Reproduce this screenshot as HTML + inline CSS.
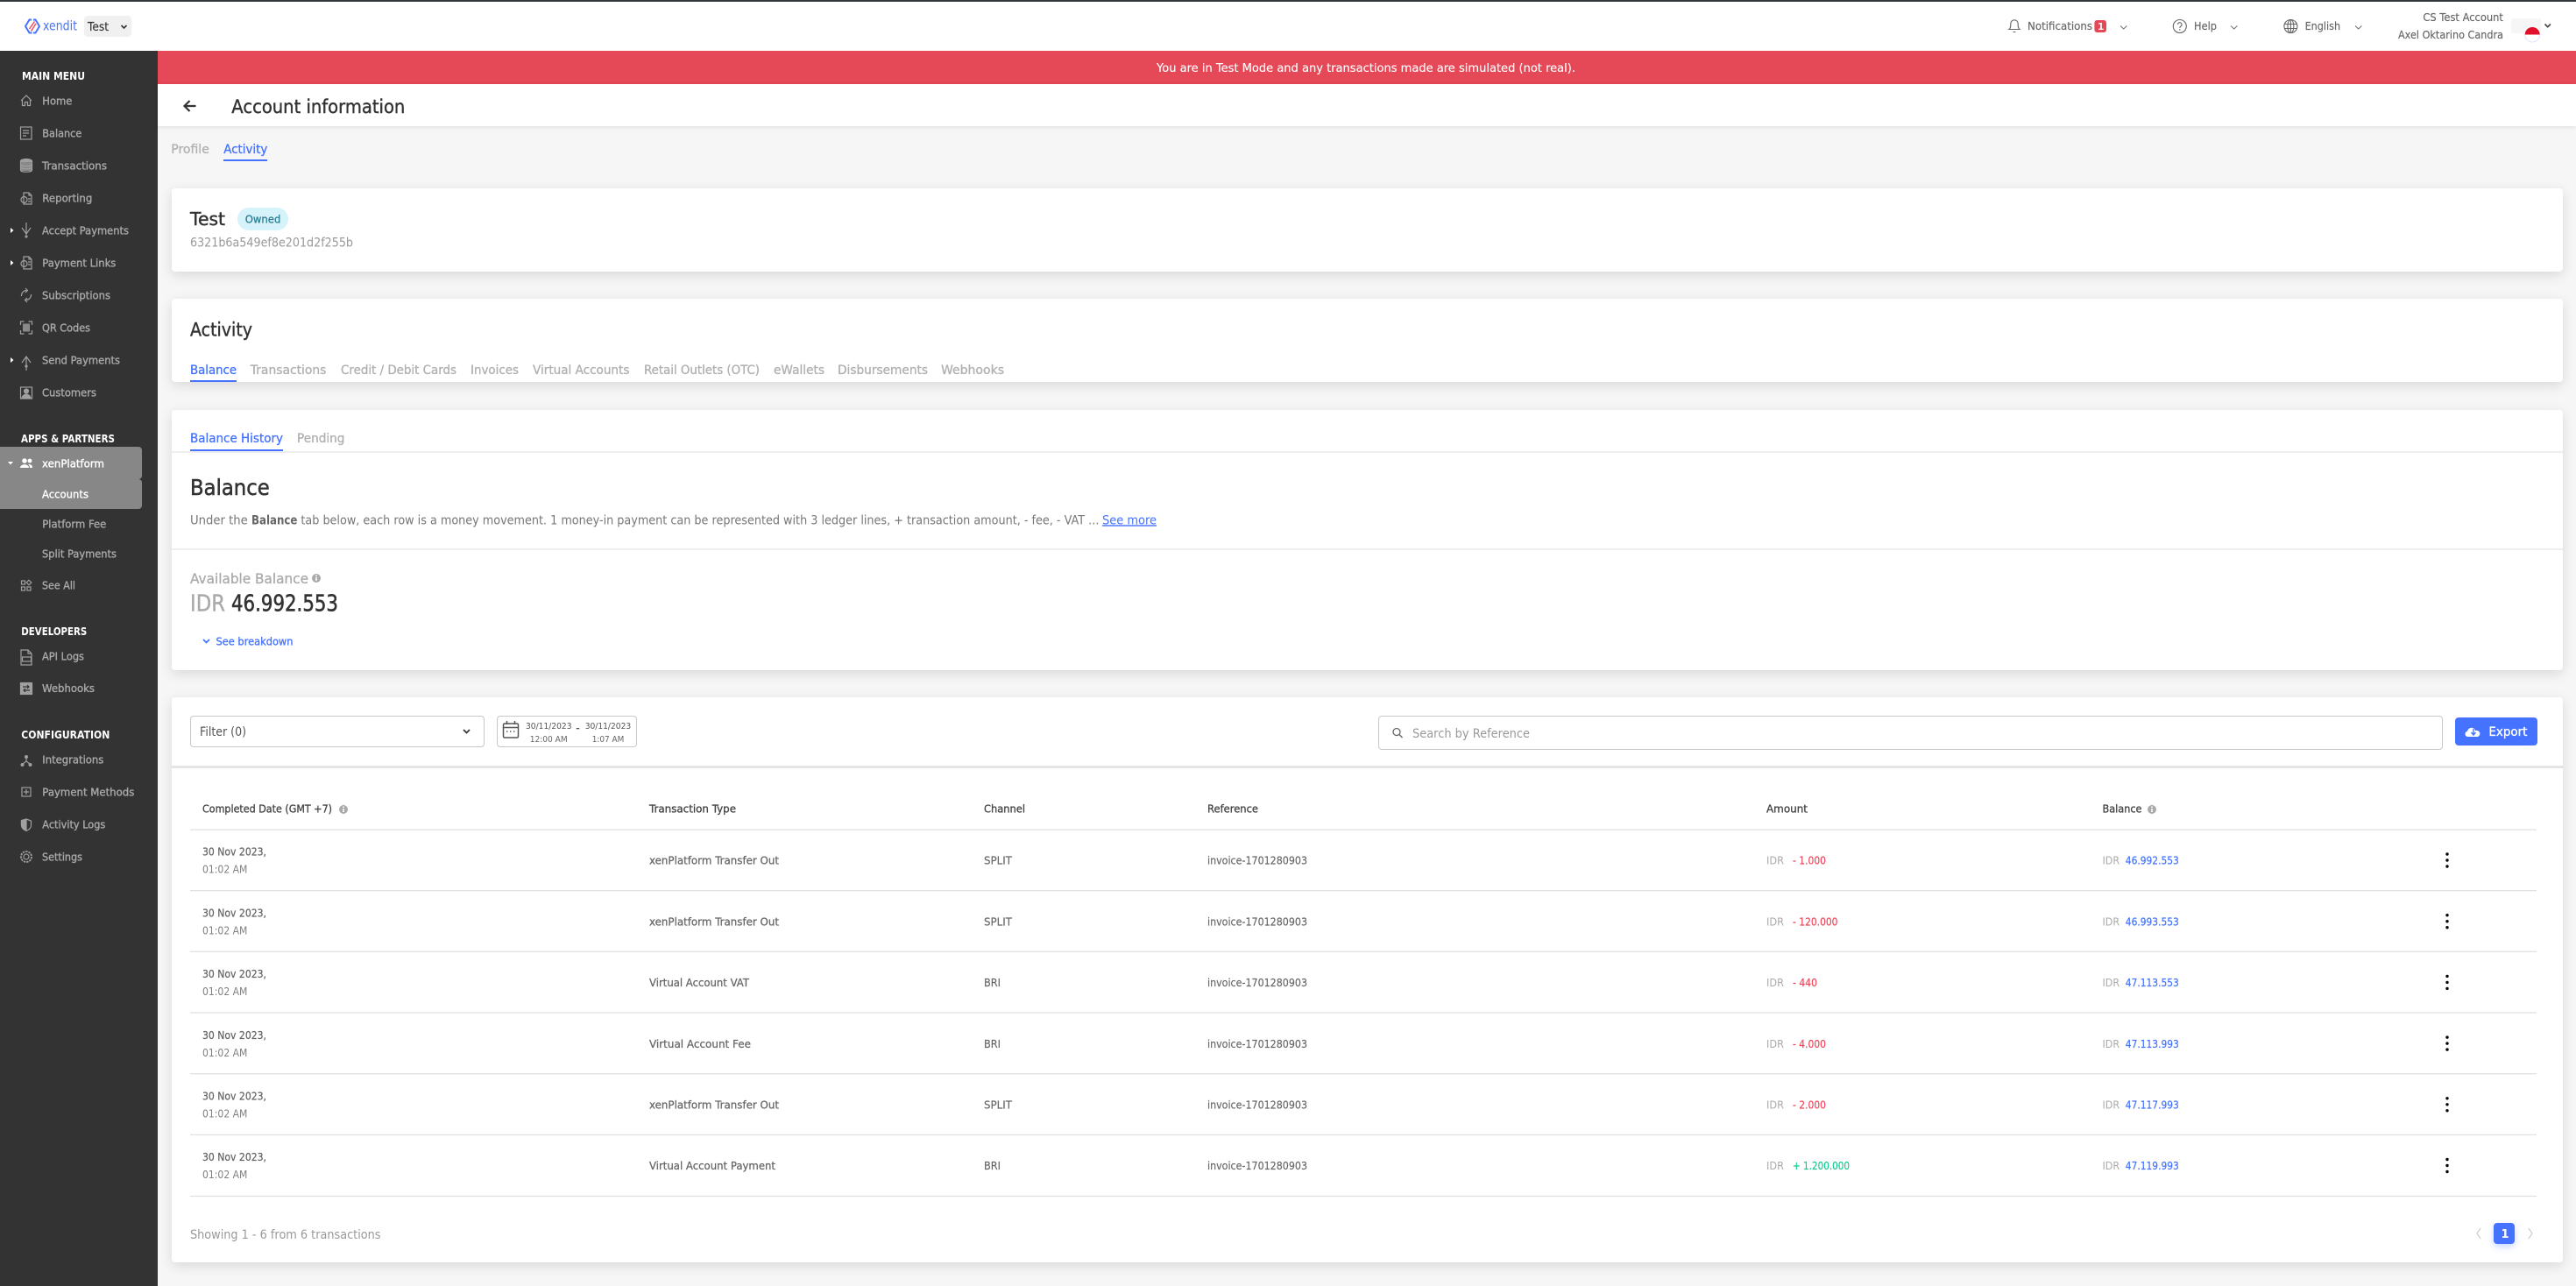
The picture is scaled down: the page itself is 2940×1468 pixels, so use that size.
<!DOCTYPE html>
<html lang="en"><head><meta charset="utf-8"><title>Account information</title>
<style>
html,body{margin:0;padding:0;width:2940px;height:1468px;overflow:hidden;background:#f6f6f6}
.b{position:absolute;box-sizing:border-box}
.card{background:#fff;border-radius:4px;box-shadow:0 4px 14px rgba(0,0,0,.12)}
svg{position:absolute;left:0;top:0}
text{font-family:"DejaVu Sans","Liberation Sans",sans-serif}
</style></head><body>
<div class="b" style="left:0;top:0;width:2940px;height:58px;background:#fff;border-top:2px solid #33383d"></div>
<div class="b" style="left:0;top:58px;width:180px;height:1410px;background:#333"></div>
<div class="b" style="left:180px;top:58px;width:2760px;height:38px;background:#e54856"></div>
<div class="b" style="left:180px;top:96px;width:2760px;height:48px;background:#fff;box-shadow:0 1px 5px rgba(0,0,0,.1)"></div>
<div class="b" style="left:0;top:510px;width:162px;height:37px;background:#878787;border-radius:0 4px 4px 0"></div>
<div class="b" style="left:0;top:547px;width:162px;height:34px;background:#878787;border-radius:0 4px 4px 0"></div>
<div class="b card" style="left:196px;top:215px;width:2729px;height:95px"></div>
<div class="b card" style="left:196px;top:341px;width:2729px;height:95px"></div>
<div class="b card" style="left:196px;top:468px;width:2729px;height:297px"></div>
<div class="b" style="left:196px;top:515px;width:2729px;height:2px;background:#eee"></div>
<div class="b" style="left:196px;top:626px;width:2729px;height:2px;background:#eee"></div>
<div class="b card" style="left:196px;top:796px;width:2729px;height:645px"></div>
<div class="b" style="left:196px;top:874px;width:2729px;height:3px;background:#e4e4e4"></div>
<div class="b" style="left:217px;top:817px;width:336px;height:36px;border:1.5px solid #c8c8c8;border-radius:4px"></div>
<div class="b" style="left:567px;top:817px;width:160px;height:36px;border:1.5px solid #c8c8c8;border-radius:4px"></div>
<div class="b" style="left:1573px;top:817px;width:1215px;height:39px;border:1.5px solid #c8c8c8;border-radius:4px"></div>
<div class="b" style="left:2802px;top:819px;width:94px;height:32px;background:#4573ff;border-radius:4px"></div>
<div class="b" style="left:2846px;top:1396px;width:24px;height:24px;background:#4573ff;border-radius:4px;box-shadow:0 3px 8px rgba(69,115,255,.3)"></div>
<div class="b" style="left:96px;top:18px;width:54px;height:24px;background:#f0f0f0;border-radius:4px"></div>

<svg width="2940" height="1468" viewBox="0 0 2940 1468" style="filter:blur(.35px)">
<!-- logo -->
<g fill="none" stroke-width="2" stroke-linejoin="round">
<path d="M36 22.500H33.500L29 30L33.500 37.500H36.500" stroke="#4573ff"/>
<path d="M38 22.500H40.500L45 30L40.500 37.500H38" stroke="#4573ff"/>
<path d="M39.500 24.500L33.500 33M41 27L35.500 35.500" stroke="#e9525f" stroke-width="1.500"/>
</g>
<text x="49" y="34.500" font-size="15" fill="#4573ff" textLength="39" lengthAdjust="spacingAndGlyphs">xendit</text>
<text x="100" y="35" font-size="13" fill="#333" stroke="#333" stroke-width=".15" textLength="24" lengthAdjust="spacingAndGlyphs">Test</text>
<path d="M138.500 29L141.500 32L144.500 29" fill="none" stroke="#333" stroke-width="1.600"/>

<!-- top right -->
<g fill="none" stroke="#666" stroke-width="1.100">
<path d="M2293 33.500c2-1.500 1.800-4 1.800-6.500a4.200 4.200 0 0 1 8.400 0c0 2.500-.2 5 1.800 6.500zM2297.500 36.500h3"/>
<circle cx="2487.800" cy="30" r="7.500"/>
<path d="M2485.500 28a2.300 2.300 0 1 1 3.500 2c-1 .6-1.200 1-1.200 2"/>
<circle cx="2614.400" cy="30" r="7.500"/><ellipse cx="2614.400" cy="30" rx="3.500" ry="7.500"/><path d="M2607 27.500h15M2607 32.500h15M2614.400 22.500v15"/>
<path d="M2420 29.500l3.700 3.500l3.700-3.500M2546 29.500l3.700 3.500l3.700-3.500M2688 29.500l3.700 3.500l3.700-3.500" stroke-width=".9"/>
</g>
<circle cx="2487.800" cy="34" r=".8" fill="#666"/>
<rect x="2390.400" y="23" width="13.600" height="14" rx="3" fill="#e54856"/>
<text x="2394" y="34" font-size="10.500" font-weight="bold" fill="#fff">1</text>
<g font-size="12" fill="#666" stroke="#666" stroke-width=".15">
<text x="2314" y="34" textLength="74" lengthAdjust="spacingAndGlyphs">Notifications</text>
<text x="2504" y="34" textLength="26" lengthAdjust="spacingAndGlyphs">Help</text>
<text x="2630.600" y="34" textLength="40.500" lengthAdjust="spacingAndGlyphs">English</text>
<text x="2765.400" y="24" textLength="91.500" lengthAdjust="spacingAndGlyphs">CS Test Account</text>
<text x="2737" y="44" textLength="120" lengthAdjust="spacingAndGlyphs">Axel Oktarino Candra</text>
</g>
<rect x="2866" y="21" width="34" height="17" rx="1" fill="#f6f6f6"/>
<circle cx="2890.200" cy="39.500" r="8.500" fill="#fff"/>
<path d="M2881.700 39.500a8.500 8.500 0 0 1 17 0z" fill="#e0102a"/>
<path d="M2881.700 39.500a8.500 8.500 0 0 0 17 0" fill="none" stroke="#d5ddff" stroke-width=".8"/>
<path d="M2904.500 27.500l3.200 3.200l3.200-3.200" fill="none" stroke="#444" stroke-width="1.600"/>

<!-- banner -->
<text x="1320" y="82" font-size="13" fill="#fff" stroke="#fff" stroke-width=".12" textLength="478" lengthAdjust="spacingAndGlyphs">You are in Test Mode and any transactions made are simulated (not real).</text>

<!-- sidebar labels -->
<g font-size="12" font-weight="bold" fill="#fff">
<text x="25" y="91" textLength="72" lengthAdjust="spacingAndGlyphs">MAIN MENU</text>
<text x="24" y="505" textLength="107" lengthAdjust="spacingAndGlyphs">APPS &amp; PARTNERS</text>
<text x="24.300" y="725" textLength="75" lengthAdjust="spacingAndGlyphs">DEVELOPERS</text>
<text x="24.300" y="843" textLength="101" lengthAdjust="spacingAndGlyphs">CONFIGURATION</text>
</g>
<g font-size="12" fill="#a9a9a9" stroke="#a9a9a9" stroke-width=".35">
<text x="48.300" y="119.300" textLength="34" lengthAdjust="spacingAndGlyphs">Home</text>
<text x="48.300" y="156.500" textLength="45" lengthAdjust="spacingAndGlyphs">Balance</text>
<text x="48" y="193.500" textLength="74" lengthAdjust="spacingAndGlyphs">Transactions</text>
<text x="48.300" y="230.500" textLength="57" lengthAdjust="spacingAndGlyphs">Reporting</text>
<text x="48" y="267.500" textLength="99" lengthAdjust="spacingAndGlyphs">Accept Payments</text>
<text x="48.300" y="304.500" textLength="84" lengthAdjust="spacingAndGlyphs">Payment Links</text>
<text x="48" y="341.500" textLength="78" lengthAdjust="spacingAndGlyphs">Subscriptions</text>
<text x="48" y="378.500" textLength="55" lengthAdjust="spacingAndGlyphs">QR Codes</text>
<text x="48" y="415.500" textLength="89" lengthAdjust="spacingAndGlyphs">Send Payments</text>
<text x="48" y="452.500" textLength="62" lengthAdjust="spacingAndGlyphs">Customers</text>
<text x="48.300" y="602.300" textLength="73" lengthAdjust="spacingAndGlyphs">Platform Fee</text>
<text x="48" y="636.700" textLength="85" lengthAdjust="spacingAndGlyphs">Split Payments</text>
<text x="48" y="672.300" textLength="38" lengthAdjust="spacingAndGlyphs">See All</text>
<text x="48" y="753.300" textLength="48" lengthAdjust="spacingAndGlyphs">API Logs</text>
<text x="48" y="790" textLength="60" lengthAdjust="spacingAndGlyphs">Webhooks</text>
<text x="48.300" y="871.300" textLength="70" lengthAdjust="spacingAndGlyphs">Integrations</text>
<text x="48.300" y="908.300" textLength="105" lengthAdjust="spacingAndGlyphs">Payment Methods</text>
<text x="48.300" y="945.300" textLength="72" lengthAdjust="spacingAndGlyphs">Activity Logs</text>
<text x="48" y="982.300" textLength="46" lengthAdjust="spacingAndGlyphs">Settings</text>
</g>
<g font-size="12" fill="#fff" stroke="#fff" stroke-width=".35">
<text x="48" y="533.300" textLength="71" lengthAdjust="spacingAndGlyphs">xenPlatform</text>
<text x="48" y="568.300" textLength="53" lengthAdjust="spacingAndGlyphs">Accounts</text>
</g>
<!-- sidebar icons -->
<g fill="none" stroke="#a0a0a0" stroke-width="1.200">
<path d="M24 115l6-6l6 6M25.500 114v6.500h3v-4h3v4h3v-6.500"/>
<rect x="23.500" y="145" width="12.500" height="14"/><path d="M26 149h7M26 152h7M26 155h4"/>
<ellipse cx="30" cy="184" rx="6.500" ry="2.500" fill="#a0a0a0"/><path d="M23.500 185h13v10h-13z" fill="#888" stroke="none"/><path d="M23.500 184v10c0 3 13 3 13 0v-10M23.500 187.500c0 3 13 3 13 0M23.500 190.500c0 3 13 3 13 0"/>
<path d="M27 220h6l3 3v10h-9zM33 220v3h3"/><circle cx="27.500" cy="228" r="3.500"/><path d="M32 227h3M32 230h3"/>
<path d="M30 254v14M25 260l5 7l5-7"/><circle cx="30" cy="270" r="1" fill="#a0a0a0"/>
<path d="M27 293h6l3 3v11h-9zM33 293v3h3"/><circle cx="27.500" cy="301" r="3.500"/><path d="M32 299h3M32 302h3"/>
<path d="M24.500 338a6 6 0 0 1 6-6.500M35.500 336a6 6 0 0 1-6 6.500M29 329l2.500 2.500l-2.500 2.500M31 340l-2.500 2.500l2.500 2.500"/>
<path d="M23.500 371v-4h4M36.500 371v-4h-4M23.500 377v4h4M36.500 377v4h-4"/><rect x="26" y="369.500" width="8" height="9" fill="#8a8a8a" stroke="none"/>
<path d="M30 423v-15M25 414l5-7l5 7"/><circle cx="30" cy="418" r="1" fill="#a0a0a0"/>
<rect x="23.500" y="442" width="13" height="13"/><circle cx="30" cy="446.500" r="2.500" fill="#a0a0a0"/><path d="M25 454c1-5 9-5 10 0z" fill="#a0a0a0"/>
<rect x="24.500" y="663" width="4" height="4"/><rect x="31" y="663" width="4" height="4" transform="rotate(45 33 665)"/><rect x="24.500" y="670" width="4" height="4"/><rect x="31" y="670" width="4" height="4"/>
<path d="M24 742h8l4 4v13h-12zM32 742v4h4"/><rect x="25.500" y="750" width="10" height="5"/>
<rect x="23.500" y="779.500" width="13" height="13" fill="#a0a0a0"/><path d="M26 784h7M31 782l2 2l-2 2M34 788h-7M29 786l-2 2l2 2" stroke="#333"/>
<path d="M30 865v4l-4 3M30 869l4 3"/><circle cx="30" cy="864" r="1.400" fill="#a0a0a0"/><circle cx="25.500" cy="873" r="1.400" fill="#a0a0a0"/><circle cx="34.500" cy="873" r="1.400" fill="#a0a0a0"/>
<rect x="25" y="899" width="10" height="10"/><path d="M30 901v6M27 904h6"/>
<path d="M30 935l5.500 2v5c0 3.500-3 5.500-5.500 6.500c-2.500-1-5.500-3-5.500-6.500v-5z"/><path d="M30 935v13c-2.500-1-5.500-3-5.500-6.500v-5z" fill="#a0a0a0"/>
<circle cx="30" cy="978" r="3"/><circle cx="30" cy="978" r="6" stroke-dasharray="2.400 1" stroke-width="1.800"/>
</g>
<path d="M12 260l3.500 3l-3.500 3zM12 297l3.500 3l-3.500 3zM12 408l3.500 3l-3.500 3z" fill="#fff"/>
<path d="M9 527h6l-3 3.500z" fill="#fff"/>
<g fill="#fff"><circle cx="28" cy="526" r="2.800"/><circle cx="34" cy="526" r="2.400"/><path d="M23 534c0-5 10-5 10 0zM34 534h3c0-3.500-2-4-5-4c1.500 1 2 2.500 2 4z"/></g>

<!-- header -->
<path d="M223.500 121h-12M216.500 115l-6 6l6 6" fill="none" stroke="#333" stroke-width="2.200"/>
<text x="264.300" y="129" font-size="21" fill="#333" stroke="#333" stroke-width=".4" textLength="198" lengthAdjust="spacingAndGlyphs">Account information</text>
<text x="195.300" y="175" font-size="14" fill="#b0b0b0" stroke="#b0b0b0" stroke-width=".3" textLength="43.500" lengthAdjust="spacingAndGlyphs">Profile</text>
<text x="255.300" y="175" font-size="14" fill="#4573ff" stroke="#4573ff" stroke-width=".3" textLength="50" lengthAdjust="spacingAndGlyphs">Activity</text>
<rect x="255" y="182" width="50" height="2" fill="#4573ff"/>

<!-- card 1 -->
<text x="217" y="257" font-size="20" fill="#333" stroke="#333" stroke-width=".45" textLength="40" lengthAdjust="spacingAndGlyphs">Test</text>
<rect x="271" y="237" width="58" height="26" rx="13" fill="#d6f2fb"/>
<text x="279.700" y="254.300" font-size="12" fill="#23798f" stroke="#23798f" stroke-width=".2" textLength="40.700" lengthAdjust="spacingAndGlyphs">Owned</text>
<text x="217" y="281.700" font-size="14.500" fill="#999" textLength="186" lengthAdjust="spacingAndGlyphs">6321b6a549ef8e201d2f255b</text>

<!-- card 2 -->
<text x="217" y="383.300" font-size="21" fill="#333" stroke="#333" stroke-width=".4" textLength="71" lengthAdjust="spacingAndGlyphs">Activity</text>
<g font-size="14" fill="#b0b0b0" stroke="#b0b0b0" stroke-width=".3">
<text x="217" y="427" fill="#4573ff" stroke="#4573ff" textLength="53" lengthAdjust="spacingAndGlyphs">Balance</text>
<text x="285.800" y="427" textLength="86.600" lengthAdjust="spacingAndGlyphs">Transactions</text>
<text x="389" y="427" textLength="132" lengthAdjust="spacingAndGlyphs">Credit / Debit Cards</text>
<text x="537" y="427" textLength="55" lengthAdjust="spacingAndGlyphs">Invoices</text>
<text x="608" y="427" textLength="110.400" lengthAdjust="spacingAndGlyphs">Virtual Accounts</text>
<text x="735" y="427" textLength="132" lengthAdjust="spacingAndGlyphs">Retail Outlets (OTC)</text>
<text x="883" y="427" textLength="58" lengthAdjust="spacingAndGlyphs">eWallets</text>
<text x="956" y="427" textLength="103" lengthAdjust="spacingAndGlyphs">Disbursements</text>
<text x="1074" y="427" textLength="72" lengthAdjust="spacingAndGlyphs">Webhooks</text>
</g>
<rect x="217" y="434" width="53" height="2" fill="#4573ff"/>

<!-- card 3 -->
<text x="217" y="505" font-size="14" fill="#4573ff" stroke="#4573ff" stroke-width=".3" textLength="106" lengthAdjust="spacingAndGlyphs">Balance History</text>
<text x="339" y="505" font-size="14" fill="#b0b0b0" stroke="#b0b0b0" stroke-width=".3" textLength="54.400" lengthAdjust="spacingAndGlyphs">Pending</text>
<rect x="217" y="513" width="106" height="2" fill="#4573ff"/>
<text x="217" y="565" font-size="25" fill="#333" stroke="#333" stroke-width=".55" textLength="90.700" lengthAdjust="spacingAndGlyphs">Balance</text>
<g font-size="14" fill="#777">
<text x="217" y="598.300" textLength="65.700" lengthAdjust="spacingAndGlyphs">Under the</text>
<text x="287" y="598.300" font-weight="bold" fill="#666" textLength="52.400" lengthAdjust="spacingAndGlyphs">Balance</text>
<text x="343.400" y="598.300" textLength="911" lengthAdjust="spacingAndGlyphs">tab below, each row is a money movement. 1 money-in payment can be represented with 3 ledger lines, + transaction amount, - fee, - VAT ...</text>
<text x="1258" y="598.300" fill="#4573ff" text-decoration="underline" textLength="62" lengthAdjust="spacingAndGlyphs">See more</text>
</g>
<text x="217" y="666" font-size="16" fill="#aaa" stroke="#aaa" stroke-width=".3" textLength="135" lengthAdjust="spacingAndGlyphs">Available Balance</text>
<circle cx="361" cy="660" r="5" fill="#aaa"/><rect x="360.200" y="659" width="1.600" height="4" fill="#fff"/><rect x="360.200" y="656.500" width="1.600" height="1.500" fill="#fff"/>
<text x="217" y="697.700" font-size="26" fill="#aaa" stroke="#aaa" stroke-width=".4" textLength="40" lengthAdjust="spacingAndGlyphs">IDR</text>
<text x="264" y="697.700" font-size="26" fill="#333" stroke="#333" stroke-width=".6" textLength="122" lengthAdjust="spacingAndGlyphs">46.992.553</text>
<path d="M232 730l3.500 3.500l3.500-3.500" fill="none" stroke="#4573ff" stroke-width="1.700"/>
<text x="246.500" y="736.700" font-size="12" fill="#4573ff" stroke="#4573ff" stroke-width=".3" textLength="88" lengthAdjust="spacingAndGlyphs">See breakdown</text>

<!-- toolbar -->
<text x="228" y="840" font-size="14.500" fill="#555" textLength="53" lengthAdjust="spacingAndGlyphs">Filter (0)</text>
<path d="M529 833l3.500 3.500l3.500-3.500" fill="none" stroke="#333" stroke-width="1.700"/>
<g fill="none" stroke="#555" stroke-width="1.500"><rect x="574.500" y="826" width="17" height="16" rx="1.500"/><path d="M574.500 830.500h17M578.500 823v4M587.500 823v4"/></g>
<path d="M578 835h1.400M582 835h1.400M586 835h1.400" stroke="#555" stroke-width="1.400"/>
<g font-size="10" fill="#555">
<text x="600" y="832" textLength="52.500" lengthAdjust="spacingAndGlyphs">30/11/2023</text>
<text x="667.700" y="832" textLength="52.500" lengthAdjust="spacingAndGlyphs">30/11/2023</text>
<text x="604.700" y="847" fill="#666" textLength="43" lengthAdjust="spacingAndGlyphs">12:00 AM</text>
<text x="675.700" y="847" fill="#666" textLength="36.600" lengthAdjust="spacingAndGlyphs">1:07 AM</text>
</g>
<rect x="657.700" y="831" width="3.500" height="1.300" fill="#555"/>
<circle cx="1594" cy="835.500" r="4" fill="none" stroke="#666" stroke-width="1.300"/><path d="M1597 838.500l3.500 3.500" stroke="#666" stroke-width="1.300"/>
<text x="1612" y="842" font-size="14" fill="#999" textLength="134" lengthAdjust="spacingAndGlyphs">Search by Reference</text>
<path d="M2817 841a3.200 3.200 0 0 1-.5-6.300a4.800 4.800 0 0 1 9.300-.6a3.500 3.500 0 0 1 2.700 6.900z" fill="#fff" transform="translate(-.5 0)"/>
<path d="M2823 832v6M2820.500 836l2.500 3l2.500-3" fill="none" stroke="#4573ff" stroke-width="1.400"/>
<text x="2840.400" y="840" font-size="14" fill="#fff" stroke="#fff" stroke-width=".3" textLength="44" lengthAdjust="spacingAndGlyphs">Export</text>

<!-- table head -->
<g font-size="12" fill="#444" stroke="#444" stroke-width=".3">
<text x="231" y="927.700" textLength="148" lengthAdjust="spacingAndGlyphs">Completed Date (GMT +7)</text>
<text x="741" y="927.700" textLength="99" lengthAdjust="spacingAndGlyphs">Transaction Type</text>
<text x="1123" y="927.700" textLength="47" lengthAdjust="spacingAndGlyphs">Channel</text>
<text x="1378" y="927.700" textLength="58" lengthAdjust="spacingAndGlyphs">Reference</text>
<text x="2016" y="927.700" textLength="47" lengthAdjust="spacingAndGlyphs">Amount</text>
<text x="2399.500" y="927.700" textLength="45" lengthAdjust="spacingAndGlyphs">Balance</text>
</g>
<circle cx="392" cy="924" r="5" fill="#aaa"/><rect x="391.200" y="923" width="1.600" height="4" fill="#fff"/><rect x="391.200" y="920.500" width="1.600" height="1.500" fill="#fff"/>
<circle cx="2456" cy="924" r="5" fill="#aaa"/><rect x="2455.200" y="923" width="1.600" height="4" fill="#fff"/><rect x="2455.200" y="920.500" width="1.600" height="1.500" fill="#fff"/>
<g fill="#e0e0e0"><rect x="217" y="946.500" width="2678" height="1.300"/><rect x="217" y="1016" width="2678" height="1.300"/><rect x="217" y="1085.700" width="2678" height="1.300"/><rect x="217" y="1155.400" width="2678" height="1.300"/><rect x="217" y="1225.100" width="2678" height="1.300"/><rect x="217" y="1294.800" width="2678" height="1.300"/><rect x="217" y="1364.800" width="2678" height="1.300"/></g>

<!-- rows -->
<g font-size="12">
<g><text x="231" y="976.700" fill="#666" stroke="#666" stroke-width=".25" textLength="73" lengthAdjust="spacingAndGlyphs">30 Nov 2023,</text><text x="231" y="996.700" fill="#808080" textLength="51.400" lengthAdjust="spacingAndGlyphs">01:02 AM</text>
<text x="741" y="986.700" fill="#666" stroke="#666" stroke-width=".25" textLength="148" lengthAdjust="spacingAndGlyphs">xenPlatform Transfer Out</text><text x="1123" y="986.700" fill="#666" stroke="#666" stroke-width=".15" textLength="32" lengthAdjust="spacingAndGlyphs">SPLIT</text><text x="1378" y="986.700" fill="#666" stroke="#666" stroke-width=".15" textLength="114" lengthAdjust="spacingAndGlyphs">invoice-1701280903</text>
<text x="2016" y="986.700" fill="#aaa" textLength="20" lengthAdjust="spacingAndGlyphs">IDR</text><text x="2046" y="986.700" fill="#f0455a" stroke="#f0455a" stroke-width=".15" textLength="38" lengthAdjust="spacingAndGlyphs">- 1.000</text>
<text x="2399.500" y="986.700" fill="#aaa" textLength="19.600" lengthAdjust="spacingAndGlyphs">IDR</text><text x="2425.800" y="986.700" fill="#4573ff" stroke="#4573ff" stroke-width=".2" textLength="61" lengthAdjust="spacingAndGlyphs">46.992.553</text>
<circle cx="2793" cy="975" r="1.700"/><circle cx="2793" cy="982" r="1.700"/><circle cx="2793" cy="989" r="1.700"/></g>
<g transform="translate(0 69.700)"><text x="231" y="976.700" fill="#666" stroke="#666" stroke-width=".25" textLength="73" lengthAdjust="spacingAndGlyphs">30 Nov 2023,</text><text x="231" y="996.700" fill="#808080" textLength="51.400" lengthAdjust="spacingAndGlyphs">01:02 AM</text>
<text x="741" y="986.700" fill="#666" stroke="#666" stroke-width=".25" textLength="148" lengthAdjust="spacingAndGlyphs">xenPlatform Transfer Out</text><text x="1123" y="986.700" fill="#666" stroke="#666" stroke-width=".15" textLength="32" lengthAdjust="spacingAndGlyphs">SPLIT</text><text x="1378" y="986.700" fill="#666" stroke="#666" stroke-width=".15" textLength="114" lengthAdjust="spacingAndGlyphs">invoice-1701280903</text>
<text x="2016" y="986.700" fill="#aaa" textLength="20" lengthAdjust="spacingAndGlyphs">IDR</text><text x="2046" y="986.700" fill="#f0455a" stroke="#f0455a" stroke-width=".15" textLength="51.500" lengthAdjust="spacingAndGlyphs">- 120.000</text>
<text x="2399.500" y="986.700" fill="#aaa" textLength="19.600" lengthAdjust="spacingAndGlyphs">IDR</text><text x="2425.800" y="986.700" fill="#4573ff" stroke="#4573ff" stroke-width=".2" textLength="61" lengthAdjust="spacingAndGlyphs">46.993.553</text>
<circle cx="2793" cy="975" r="1.700"/><circle cx="2793" cy="982" r="1.700"/><circle cx="2793" cy="989" r="1.700"/></g>
<g transform="translate(0 139.400)"><text x="231" y="976.700" fill="#666" stroke="#666" stroke-width=".25" textLength="73" lengthAdjust="spacingAndGlyphs">30 Nov 2023,</text><text x="231" y="996.700" fill="#808080" textLength="51.400" lengthAdjust="spacingAndGlyphs">01:02 AM</text>
<text x="741" y="986.700" fill="#666" stroke="#666" stroke-width=".25" textLength="114" lengthAdjust="spacingAndGlyphs">Virtual Account VAT</text><text x="1123" y="986.700" fill="#666" stroke="#666" stroke-width=".15" textLength="19" lengthAdjust="spacingAndGlyphs">BRI</text><text x="1378" y="986.700" fill="#666" stroke="#666" stroke-width=".15" textLength="114" lengthAdjust="spacingAndGlyphs">invoice-1701280903</text>
<text x="2016" y="986.700" fill="#aaa" textLength="20" lengthAdjust="spacingAndGlyphs">IDR</text><text x="2046" y="986.700" fill="#f0455a" stroke="#f0455a" stroke-width=".15" textLength="28" lengthAdjust="spacingAndGlyphs">- 440</text>
<text x="2399.500" y="986.700" fill="#aaa" textLength="19.600" lengthAdjust="spacingAndGlyphs">IDR</text><text x="2425.800" y="986.700" fill="#4573ff" stroke="#4573ff" stroke-width=".2" textLength="61" lengthAdjust="spacingAndGlyphs">47.113.553</text>
<circle cx="2793" cy="975" r="1.700"/><circle cx="2793" cy="982" r="1.700"/><circle cx="2793" cy="989" r="1.700"/></g>
<g transform="translate(0 209.100)"><text x="231" y="976.700" fill="#666" stroke="#666" stroke-width=".25" textLength="73" lengthAdjust="spacingAndGlyphs">30 Nov 2023,</text><text x="231" y="996.700" fill="#808080" textLength="51.400" lengthAdjust="spacingAndGlyphs">01:02 AM</text>
<text x="741" y="986.700" fill="#666" stroke="#666" stroke-width=".25" textLength="116" lengthAdjust="spacingAndGlyphs">Virtual Account Fee</text><text x="1123" y="986.700" fill="#666" stroke="#666" stroke-width=".15" textLength="19" lengthAdjust="spacingAndGlyphs">BRI</text><text x="1378" y="986.700" fill="#666" stroke="#666" stroke-width=".15" textLength="114" lengthAdjust="spacingAndGlyphs">invoice-1701280903</text>
<text x="2016" y="986.700" fill="#aaa" textLength="20" lengthAdjust="spacingAndGlyphs">IDR</text><text x="2046" y="986.700" fill="#f0455a" stroke="#f0455a" stroke-width=".15" textLength="38" lengthAdjust="spacingAndGlyphs">- 4.000</text>
<text x="2399.500" y="986.700" fill="#aaa" textLength="19.600" lengthAdjust="spacingAndGlyphs">IDR</text><text x="2425.800" y="986.700" fill="#4573ff" stroke="#4573ff" stroke-width=".2" textLength="61" lengthAdjust="spacingAndGlyphs">47.113.993</text>
<circle cx="2793" cy="975" r="1.700"/><circle cx="2793" cy="982" r="1.700"/><circle cx="2793" cy="989" r="1.700"/></g>
<g transform="translate(0 278.800)"><text x="231" y="976.700" fill="#666" stroke="#666" stroke-width=".25" textLength="73" lengthAdjust="spacingAndGlyphs">30 Nov 2023,</text><text x="231" y="996.700" fill="#808080" textLength="51.400" lengthAdjust="spacingAndGlyphs">01:02 AM</text>
<text x="741" y="986.700" fill="#666" stroke="#666" stroke-width=".25" textLength="148" lengthAdjust="spacingAndGlyphs">xenPlatform Transfer Out</text><text x="1123" y="986.700" fill="#666" stroke="#666" stroke-width=".15" textLength="32" lengthAdjust="spacingAndGlyphs">SPLIT</text><text x="1378" y="986.700" fill="#666" stroke="#666" stroke-width=".15" textLength="114" lengthAdjust="spacingAndGlyphs">invoice-1701280903</text>
<text x="2016" y="986.700" fill="#aaa" textLength="20" lengthAdjust="spacingAndGlyphs">IDR</text><text x="2046" y="986.700" fill="#f0455a" stroke="#f0455a" stroke-width=".15" textLength="38" lengthAdjust="spacingAndGlyphs">- 2.000</text>
<text x="2399.500" y="986.700" fill="#aaa" textLength="19.600" lengthAdjust="spacingAndGlyphs">IDR</text><text x="2425.800" y="986.700" fill="#4573ff" stroke="#4573ff" stroke-width=".2" textLength="61" lengthAdjust="spacingAndGlyphs">47.117.993</text>
<circle cx="2793" cy="975" r="1.700"/><circle cx="2793" cy="982" r="1.700"/><circle cx="2793" cy="989" r="1.700"/></g>
<g transform="translate(0 348.500)"><text x="231" y="976.700" fill="#666" stroke="#666" stroke-width=".25" textLength="73" lengthAdjust="spacingAndGlyphs">30 Nov 2023,</text><text x="231" y="996.700" fill="#808080" textLength="51.400" lengthAdjust="spacingAndGlyphs">01:02 AM</text>
<text x="741" y="986.700" fill="#666" stroke="#666" stroke-width=".25" textLength="144" lengthAdjust="spacingAndGlyphs">Virtual Account Payment</text><text x="1123" y="986.700" fill="#666" stroke="#666" stroke-width=".15" textLength="19" lengthAdjust="spacingAndGlyphs">BRI</text><text x="1378" y="986.700" fill="#666" stroke="#666" stroke-width=".15" textLength="114" lengthAdjust="spacingAndGlyphs">invoice-1701280903</text>
<text x="2016" y="986.700" fill="#aaa" textLength="20" lengthAdjust="spacingAndGlyphs">IDR</text><text x="2046" y="986.700" fill="#13c98e" stroke="#13c98e" stroke-width=".15" textLength="65" lengthAdjust="spacingAndGlyphs">+ 1.200.000</text>
<text x="2399.500" y="986.700" fill="#aaa" textLength="19.600" lengthAdjust="spacingAndGlyphs">IDR</text><text x="2425.800" y="986.700" fill="#4573ff" stroke="#4573ff" stroke-width=".2" textLength="61" lengthAdjust="spacingAndGlyphs">47.119.993</text>
<circle cx="2793" cy="975" r="1.700"/><circle cx="2793" cy="982" r="1.700"/><circle cx="2793" cy="989" r="1.700"/></g>
</g>

<!-- footer -->
<text x="217" y="1414" font-size="14" fill="#999" textLength="217.500" lengthAdjust="spacingAndGlyphs">Showing 1 - 6 from 6 transactions</text>
<text x="2854.500" y="1413" font-size="13" font-weight="bold" fill="#fff">1</text>
<path d="M2831 1402l-4 6l4 6M2886 1402l4 6l-4 6" fill="none" stroke="#ccc" stroke-width="1.200"/>
</svg>
</body></html>
